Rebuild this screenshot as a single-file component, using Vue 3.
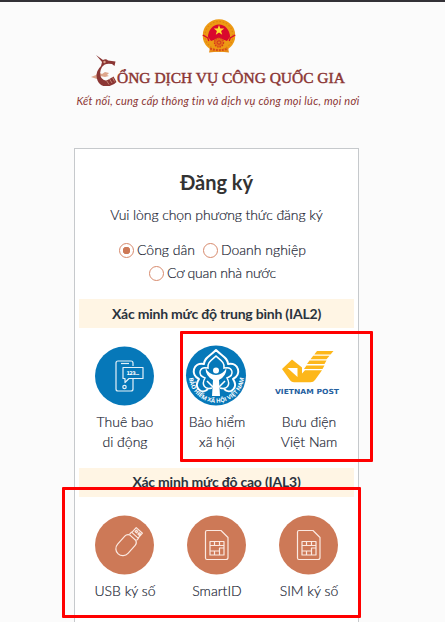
<script setup>
const basic = [
  { icon: 'phone', lines: ['Thuê bao', 'di động'] },
  { icon: 'bhxh', lines: ['Bảo hiểm', 'xã hội'] },
  { icon: 'post', lines: ['Bưu điện', 'Việt Nam'] },
]
const high = [
  { icon: 'usb', label: 'USB ký số' },
  { icon: 'sim', label: 'SmartID' },
  { icon: 'sim', label: 'SIM ký số' },
]
</script>

<template>
  <div class="page">
    <header class="head">
      <svg class="emblem" viewBox="0 0 34 34">
        <path d="M8.500 27h17l1.500 6.500q-10-1.500-20 0z" fill="#e88b16" />
        <circle cx="17" cy="16.5" r="16.3" fill="#ed9a14" />
        <circle cx="17" cy="16.5" r="14" fill="none" stroke="#e08212" stroke-width="1.2" stroke-dasharray="1.5 1.8" />
        <path d="M6 18a11 12.500 0 1 1 22 0l-3 4-8-3-8 3z" fill="#d9082d" />
        <path d="M17 6l1.300 3.600h3.900l-3.100 2.400 1.100 3.700-3.200-2.200-3.200 2.200 1.100-3.700-3.100-2.400h3.900z" fill="#ffe12e" />
        <path d="M.8 16l5 3 1 3M33.200 16l-5 3-1 3" stroke="#d9082d" stroke-width="1.300" fill="none" />
        <circle cx="17" cy="23.500" r="4.600" fill="#e66b17" stroke="#d33a1e" stroke-width="1.200" stroke-dasharray="1.500 1" />
        <circle cx="17" cy="23.500" r="1.700" fill="#e9801a" stroke="#c51f22" stroke-width=".7" />
        <path d="M8 29.500q9 3.500 18 0" stroke="#d84a1c" stroke-width="2" stroke-dasharray="2 1" fill="none" />
      </svg>
      <div class="brand">
        <svg class="bird" viewBox="0 0 26 31">
          <path d="M0 22l5-2 2-3 4 2 3-2 4 1-2 2 2 1-4 1-5-1-3 3-3-1z" fill="#dda68c" />
          <path d="M5 0l7 5q3-1.500 5 .5l7.500 1-1 4.500-2.500-2q-7-1.500-10 3-3.500 6-.5 11 3 4 7 1.500l5-3 3 5.500q-3 4-10.500 4.500-6-.5-8.500-6-3-8 3.500-14.500l1-4z" fill="#8b3634" />
          <circle cx="13.500" cy="7" r="1.200" fill="#d9a08a" />
          <path d="M15.500 25.500l2.500 4M18.500 24l2.500 4M21.500 22.500l2 4" stroke="#d9a08a" stroke-width=".7" />
        </svg>
        <span class="brand-text">ỔNG DỊCH VỤ CÔNG QUỐC GIA</span>
      </div>
      <div class="slogan"><span>Kết nối, cung cấp thông tin và dịch vụ công mọi lúc, mọi nơi</span></div>
    </header>

    <main class="card">
      <h1>Đăng ký</h1>
      <p class="intro"><span>Vui lòng chọn phương thức đăng ký</span></p>
      <div class="options">
        <div class="option-row">
          <span class="radio on"></span><span class="opt">Công dân</span>
          <span class="radio second"></span><span class="opt">Doanh nghiệp</span>
        </div>
        <div class="option-row">
          <span class="radio"></span><span class="opt o3">Cơ quan nhà nước</span>
        </div>
      </div>

      <h2 class="band b1">Xác minh mức độ trung bình (IAL2)</h2>
      <div class="grid">
        <div v-for="m in basic" :key="m.icon" class="method">
          <svg v-if="m.icon === 'phone'" class="icon" viewBox="0 0 60 60">
            <circle cx="29.500" cy="30" r="29.500" fill="#0678b9" />
            <g fill="none" stroke="#e4f1f8" stroke-width="1.200" stroke-linejoin="round">
              <path d="M38 20v-3q0-2-2-2H23q-2 0-2 2v26q0 2 2 2h13q2 0 2-2V31" />
              <path d="M26 17.500h8" /><circle cx="29.500" cy="41" r="1.700" />
              <path d="M28 21.500h20v11H34l-4 4v-4h-2z" fill="#0678b9" />
            </g>
            <text class="digits" x="31.500" y="28.600" textLength="13">123...</text>
          </svg>
          <svg v-else-if="m.icon === 'bhxh'" class="icon" viewBox="0 0 60 60">
            <defs><path id="seal-arc" d="M1.800 29A27.700 27.700 0 0 0 57.200 29" /></defs>
            <circle cx="29" cy="29.500" r="30" fill="#0678b9" />
            <g transform="translate(-1 1)">
              <path d="M22 42C16 48 7 41 13 32 4 28 7 15 18 17 18 11 24 9 30 3 36 9 42 11 42 17 53 15 56 28 47 32 53 41 44 48 38 42" fill="none" stroke="#fff" stroke-width="2" stroke-linejoin="round" />
              <path d="M26 41C19 43 15 38 19 31 11 28 13 19 22 21 21 15 26 13 30 9 34 13 39 15 38 21 47 19 49 28 41 31 45 38 41 43 34 41" fill="none" stroke="#fff" stroke-width="1.500" />
              <circle cx="30" cy="23.500" r="3" fill="#fff" />
              <path d="M19.500 21q4 7 10.500 7t10.500-7q0 8-7.500 12l1 16h-8l1-16q-7.500-4-7.500-12z" fill="#fff" />
              <path d="M21 34l8 8M39 34l-8 8" stroke="#fff" stroke-width="1.600" />
            </g>
            <text class="seal"><textPath href="#seal-arc" startOffset="3" textLength="81" lengthAdjust="spacingAndGlyphs">BẢO HIỂM XÃ HỘI VIỆT NAM</textPath></text>
          </svg>
          <svg v-else class="icon wide" viewBox="0 0 66 60">
            <g fill="#fdb71a">
              <path fill-rule="evenodd" d="M6 23L16 13.500 26 21.500V27.500L29 24.300H46L39 34Q37.500 36.200 34.500 36.200H18Q15.500 36.200 14.300 34.500zM11.500 22L21.500 31V22z" />
              <path d="M41 5H57.500L54.500 8.500H38.300z" /><path d="M37.200 9.800H53.500L50.500 13.300H34.500z" />
              <path d="M33.500 14.600H50.500L48.500 18.100H31z" /><path d="M30.500 19.400H48.500L46.500 22.900H28z" />
            </g>
            <text class="post" x="-1" y="48.300" textLength="64" lengthAdjust="spacingAndGlyphs">VIETNAM POST</text>
          </svg>
          <span v-for="l in m.lines" :key="l" class="label">{{ l }}</span>
        </div>
      </div>

      <h2 class="band b2">Xác minh mức độ cao (IAL3)</h2>
      <div class="grid high">
        <div v-for="m in high" :key="m.label" class="method">
          <svg class="icon" viewBox="0 0 60 60">
            <circle cx="29.500" cy="30" r="29.500" fill="#cd7957" />
            <g v-if="m.icon === 'usb'" transform="translate(2.300 1.200) rotate(42 30 30) scale(.93)" fill="none" stroke="#fbe9e1" stroke-width="1.300" stroke-linejoin="round">
              <path d="M26 21.500H35Q38 23 38 26V37.500A7.500 7.500 0 0 1 23 37.500V26Q23 23 26 21.500z" />
              <path d="M25.500 21v-3h10v3M26 18v-7h9v7M28 13h2v2h-2zM32 13h2v2h-2z" />
            </g>
            <g v-else fill="none" stroke="#fbe9e1" stroke-width="1.200" stroke-linejoin="round">
              <path d="M20 15.500H34l7 7v20q0 2-2 2H20q-1.500 0-1.500-1.500v-26q0-1.500 1.500-1.500z" />
              <path d="M23 26.500h14v13.500h-14zM23 30.500h14M27.500 26.500v4M32.500 26.500v4M23 36H32.500v-3h4.500M27.500 36v4M32.500 36v4" />
            </g>
          </svg>
          <span class="label">{{ m.label }}</span>
        </div>
      </div>
    </main>
    <div class="mark mark-a"></div>
    <div class="mark mark-b"></div>
  </div>
</template>

<style>
body { margin: 0; background: #fbfbfb; overflow: hidden; }
</style>
<style scoped>
.page { position: relative; box-sizing: border-box; width: 445px; height: 622px; overflow: hidden; border-top: 2px solid #333136; background: #fbfbfb; color: #1c2634; font: 300 14px/20px Lato, "Open Sans", sans-serif; display: flex; flex-direction: column; }
.head { height: 146px; flex: none; display: flex; flex-direction: column; align-items: center; padding-top: 17px; box-sizing: border-box; padding-right: 9px; }
.emblem { width: 34px; height: 34px; flex: none; margin-left: 2px; }
.brand { display: flex; height: 35px; padding-top: 2px; width: 254px; box-sizing: border-box; }
.bird { width: 26px; height: 31px; flex: none; }
.brand-text { font: 400 15.500px/20px "Liberation Serif", serif; letter-spacing: -.02px; white-space: nowrap; color: #8b3634; -webkit-text-stroke: .45px #8b3634; padding-top: 13px; height: 20px; }
.slogan { font-size: 11px; line-height: 16px; margin-top: 5px; letter-spacing: .24px; font-style: italic; font-weight: 400; color: #8b3634; white-space: nowrap; }
.card { box-sizing: border-box; width: 285px; height: 480px; flex: none; margin-left: 74px; border: 1px solid #c6c9cc; background: #fff; padding: 0 4px; text-align: center; -webkit-text-stroke: .18px currentColor; }
h1 { font-size: 20px; line-height: 28px; font-weight: 700; margin: 19px 0 0; color: #333; -webkit-text-stroke: 0; }
.intro { margin: 9px 0 0; line-height: 20px; letter-spacing: -.09px; white-space: nowrap; }
.options { padding-top: 14px; padding-right: 8px; }
.option-row { display: flex; justify-content: center; align-items: center; height: 23px; white-space: nowrap; }
.opt { margin-top: -1px; }
.o3 { letter-spacing: -.19px; }
.radio { box-sizing: border-box; width: 15px; height: 15px; border: 1px solid #d78a6d; border-radius: 50%; margin-right: 3px; flex: none; }
.radio.on { background: radial-gradient(circle, #cd7957 0 3.500px, transparent 4px); }
.radio.second { margin-left: 8px; }
.band { margin: 14px 0 0; height: 29px; line-height: 29px; background: #fff5e4; font-size: 14px; font-weight: 700; letter-spacing: -.21px; color: #2b333e; white-space: nowrap; -webkit-text-stroke: 0; }
.grid { display: grid; grid-template-columns: 92px 92px 92px; padding-top: 18px; height: 122px; }
.method { display: flex; flex-direction: column; align-items: center; }
.icon { width: 60px; height: 60px; margin-bottom: 6px; flex: none; -webkit-text-stroke: 0; overflow: visible; }
.icon.wide { width: 66px; }
.label { line-height: 20px; white-space: nowrap; }
.band.b2 { margin-top: 0; line-height: 28px; }
.digits { font: 700 5px "DejaVu Sans", sans-serif; fill: #fff; }
.seal { font: 700 5.800px "Open Sans", sans-serif; fill: #fff; }
.post { font: 700 7px "DejaVu Sans", sans-serif; fill: #2460a0; }
.mark { position: absolute; box-sizing: border-box; border: 3px solid #f00; border-radius: 1px; }
.mark-a { left: 180px; top: 329px; width: 193px; height: 131px; }
.mark-b { left: 62px; top: 485px; width: 299px; height: 131px; }
</style>
